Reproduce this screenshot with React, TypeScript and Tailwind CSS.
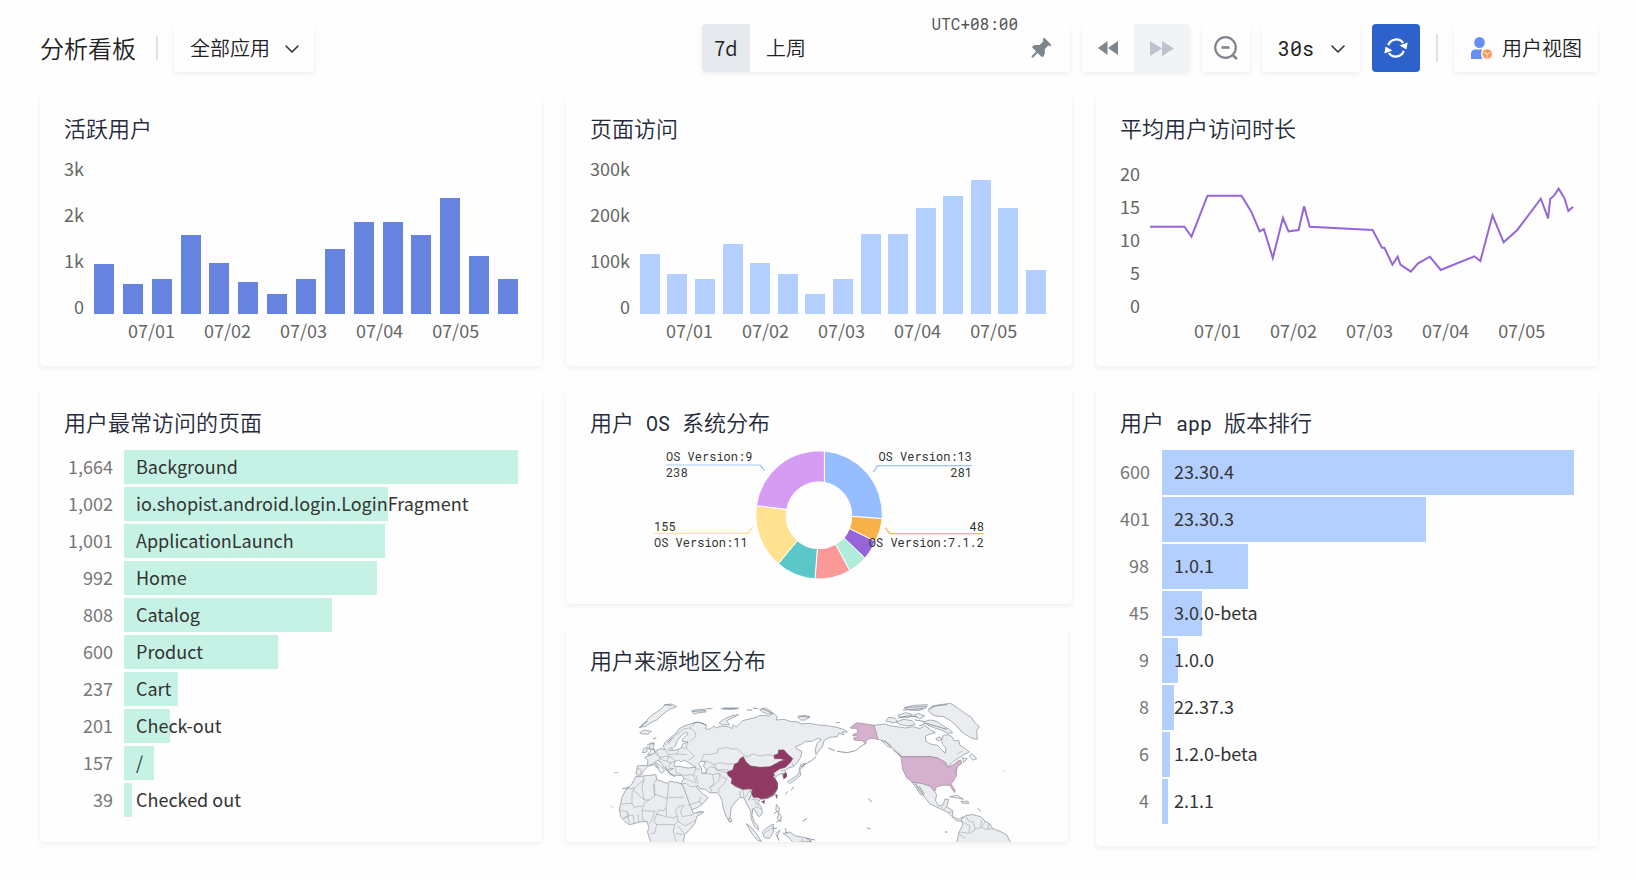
import type { ReactNode } from "react";

type Row = { label: string; value: string; size: number };

const dates = ["07/01", "07/02", "07/03", "07/04", "07/05"];
const activeUsers = [50, 30, 35, 79, 51, 32, 20, 35, 65, 92, 92, 79, 116, 58, 35];
const pageViews = [60, 40, 35, 70, 51, 40, 20, 35, 80, 80, 106, 118, 134, 106, 44];

const pages: Row[] = [
  { label: "Background", value: "1,664", size: 100 },
  { label: "io.shopist.android.login.LoginFragment", value: "1,002", size: 67 },
  { label: "ApplicationLaunch", value: "1,001", size: 66.2 },
  { label: "Home", value: "992", size: 64.2 },
  { label: "Catalog", value: "808", size: 52.8 },
  { label: "Product", value: "600", size: 39 },
  { label: "Cart", value: "237", size: 13.7 },
  { label: "Check-out", value: "201", size: 11.6 },
  { label: "/", value: "157", size: 7.6 },
  { label: "Checked out", value: "39", size: 2 },
];

const versions: Row[] = [
  { label: "23.30.4", value: "600", size: 100 },
  { label: "23.30.3", value: "401", size: 64 },
  { label: "1.0.1", value: "98", size: 20.9 },
  { label: "3.0.0-beta", value: "45", size: 9.7 },
  { label: "1.0.0", value: "9", size: 3.9 },
  { label: "22.37.3", value: "8", size: 2.9 },
  { label: "1.2.0-beta", value: "6", size: 1.9 },
  { label: "2.1.1", value: "4", size: 1.4 },
];

const durationLine =
  "0,52.7 34.5,52.7 41.5,62.7 57.5,21.7 91.5,21.7 101.3,37.7 109.6,57.3 113.8,55 122.8,84 132.9,44 138.5,57.3 148.6,56 154.1,32.3 159.7,52.7 222.6,56 232,73.7 234.4,73.7 242.4,90.7 247.6,82.7 250.4,90.7 260.8,97.7 268.1,89.3 279.9,82.7 290.7,96 324.4,82.3 330.3,87 342.5,41.3 353.6,68.3 367.5,55.7 390.8,24.7 398.1,44.3 400.2,25 404,21.7 408.6,14.7 414.5,24.3 418.3,37 423.1,32.7";

const shadow = "shadow-[0_2px_5px_rgba(20,40,60,0.07)]";

function Card({ title, className, children }: { title: ReactNode; className: string; children: ReactNode }) {
  return (
    <section className={`rounded bg-[#fefefe] pt-[15px] ${shadow} ${className}`}>
      <h2 className="text-[22px] leading-8 font-[350] whitespace-pre text-[#252b3a]">{title}</h2>
      {children}
    </section>
  );
}

function Mono({ children }: { children: ReactNode }) {
  return <span className="font-['Roboto_Mono','Liberation_Mono',monospace] text-[20px] leading-none font-normal">{children}</span>;
}

function Dates({ className }: { className: string }) {
  return (
    <div className={`flex gap-[29px] text-lg leading-6 text-[#666] ${className}`}>
      {dates.map((d) => (
        <span key={d}>{d}</span>
      ))}
    </div>
  );
}

function BarChart({ ticks, bars, color, dateClass }: { ticks: string[]; bars: number[]; color: string; dateClass: string }) {
  return (
    <>
      <div className="mt-[13px] flex gap-2.5">
        <div className="flex flex-col gap-[22px] text-right text-lg leading-6 text-[#666]">
          {ticks.map((t) => (
            <span key={t}>{t}</span>
          ))}
        </div>
        <div className="flex flex-1 items-end justify-between pb-1">
          {bars.map((h, i) => (
            <div key={i} className={`w-5 ${color}`} style={{ height: h }} />
          ))}
        </div>
      </div>
      <Dates className={dateClass} />
    </>
  );
}

function RankList({ rows, rowClass, valueClass, barClass, gapClass }: { rows: Row[]; rowClass: string; valueClass: string; barClass: string; gapClass: string }) {
  return (
    <ol className={`mt-[13px] flex flex-col text-lg ${gapClass}`}>
      {rows.map((r) => (
        <li key={r.label} className={`flex items-center ${rowClass}`}>
          <span className={`shrink-0 pb-[3px] text-right text-[#777] ${valueClass}`}>{r.value}</span>
          <div className="h-full min-w-0 flex-1">
            <div className={`flex h-full items-center pb-[3px] whitespace-nowrap text-[#333] ${barClass}`} style={{ width: `${r.size}%` }}>
              <span className="ml-3 w-0">{r.label}</span>
            </div>
          </div>
        </li>
      ))}
    </ol>
  );
}

function Chevron({ className }: { className: string }) {
  return (
    <svg viewBox="0 0 14 8" className={`pointer-events-none absolute top-[21px] h-2 w-3.5 ${className}`} fill="none" stroke="#333" strokeWidth="1.6" strokeLinecap="round" strokeLinejoin="round">
      <path d="M1 1l6 6 6-6" />
    </svg>
  );
}

function Donut() {
  return (
    <svg viewBox="0 0 360 150" className="mx-auto mt-0.5 h-[150px] w-[360px]" role="img" aria-label="OS">
      <g transform="translate(-79 -60) scale(0.33333)" stroke="#fff" strokeWidth="3" strokeLinejoin="round">
        <path fill="#96bdff" d="M793 216A190 193 0 0 1 967 419L875 412A98 100 0 0 0 793 310Z" />
        <path fill="#f7b24a" d="M967 419A190 193 0 0 1 946 487L868 449A98 100 0 0 0 875 412Z" />
        <path fill="#9466da" d="M946 487A190 193 0 0 1 915 538L852 477A98 100 0 0 0 868 449Z" />
        <path fill="#afecd9" d="M915 538A190 193 0 0 1 869 575L827 496A98 100 0 0 0 852 477Z" />
        <path fill="#fb9898" d="M869 575A190 193 0 0 1 765 600L772 509A98 100 0 0 0 827 496Z" />
        <path fill="#5bc7c9" d="M765 600A190 193 0 0 1 655 554L712 485A98 100 0 0 0 772 509Z" />
        <path fill="#ffe190" d="M655 554A190 193 0 0 1 589 380L680 391A98 100 0 0 0 712 485Z" />
        <path fill="#d69bf2" d="M589 380A190 193 0 0 1 793 216L793 310A98 100 0 0 0 680 391Z" />
      </g>
      <g transform="translate(-79 -60) scale(0.33333)" fill="none" strokeWidth="4">
        <path stroke="#c3daff" strokeWidth="5" d="M318 258H600" />
        <path stroke="#9fc2ff" d="M600 258l14 17" />
        <path stroke="#9fc2ff" d="M1236 260H953L940 279" />
        <path stroke="#ffe29a" d="M282 463H564L578 444" />
        <path stroke="#fab957" d="M1271 464H989L976 446" />
      </g>
      <g className="font-['Roboto_Mono','Liberation_Mono',monospace] text-xs font-normal" fill="#333">
        <text x="27" y="22">OS Version:9</text>
        <text x="27" y="38">238</text>
        <text x="333" y="22" textAnchor="end">OS Version:13</text>
        <text x="333" y="38" textAnchor="end">281</text>
        <text x="15" y="92">155</text>
        <text x="15" y="108">OS Version:11</text>
        <text x="345" y="92" textAnchor="end">48</text>
        <text x="345" y="108" textAnchor="end">OS Version:7.1.2</text>
      </g>
    </svg>
  );
}

function WorldMap() {
  return (
    <svg viewBox="90 240 1380 426" className="mt-[25px] w-[460px] max-w-full" role="img" aria-label="地区" strokeLinejoin="round" strokeLinecap="round">
      <g fill="#ebecf0" stroke="#97a0aa" strokeWidth="2.5">
        {/* Eurasia */}
        <path d="M314 388L310 378 316 366 332 352 346 342 358 326 372 318 398 310 412 306 428 310 440 316 436 326 448 328 462 318 468 324 484 318 506 320 516 326 520 314 528 322 540 310 548 302 572 296 590 292 600 286 628 288 640 280 652 290 648 300 672 298 690 304 716 306 722 312 748 310 770 314 808 318 830 322 850 328 862 336 846 336 852 344 836 340 832 350 808 352 792 362 788 378 776 394 768 404 766 388 772 370 784 358 770 356 758 364 736 364 722 374 706 380 712 388 726 394 722 412 710 430 698 440 686 444 674 452 680 464 676 474 670 472 668 460 656 464 644 472 652 490 652 508 642 526 622 536 600 538 594 548 604 562 608 578 598 590 592 586 586 572 578 566 576 586 582 604 594 618 596 630 584 620 574 598 572 572 560 552 552 534 540 532 526 546 514 562 510 594 515 604 508 606 498 588 490 566 486 542 480 528 470 518 448 518 436 508 420 506 412 496 408 500 422 516 432 524 444 532 434 546 414 562 384 574 378 556 366 528 358 506 364 488 372 474 364 466 344 466 330 464 326 452 340 446 330 444 322 452 312 444 304 428 292 420 286 426 304 440 314 452 304 460 294 446 280 434 262 440 252 452 244 464 234 466 228 462 232 438 262 436 264 422 254 412 270 406 282 398 290 390 302 386Z" />
        <path fill="#fefefe" d="M424 424L436 426 430 438 440 450 438 462 426 458 424 444 416 432Z" />
        <path fill="#fefefe" d="M342 438L344 426 354 420 364 426 370 420 384 426 398 436 408 442 384 444 362 440Z" />
        <path fill="#fefefe" d="M326 390L332 382 336 388 346 378 352 362 366 344 380 336 384 342 370 354 366 364 384 366 368 372 364 384 348 390Z" />
        {/* Africa */}
        <path d="M228 470L250 468 288 464 290 480 306 484 320 490 330 484 354 488 366 492 376 516 388 550 400 580 424 574 432 576 410 590 406 608 392 626 374 644 370 668H272L262 634 268 624 260 604 240 606 226 610 208 614 194 604 182 590 178 570 182 552 186 532 198 508 214 494Z" />
        {/* Greenland, Iceland and Arctic islands */}
        <path d="M238 322L256 306 270 290 302 268 316 254 334 252 350 260 328 268 310 282 290 300 276 306 258 318Z" />
        <path d="M240 338L252 330 274 334 264 342 246 342ZM1106 270L1116 258 1140 254 1172 250 1196 266 1218 282 1234 292 1244 308 1258 320 1250 332 1252 358 1238 356 1214 342 1200 330 1190 318 1172 302 1150 290 1126 288 1112 280Z" />
        <path d="M396 272L416 268 436 268 438 276 416 278 402 282ZM484 266L512 264 536 264 520 268 496 268ZM478 308L494 296 514 288 536 284 516 294 500 302 508 314 488 314ZM600 268L616 264 630 272 640 280 622 282 608 276ZM714 292L732 286 750 290 736 300 724 300Z" />
        {/* Britain and Ireland */}
        <path d="M270 374L282 368 280 382 286 398 276 404 262 404 272 394 268 384ZM254 384L262 382 260 396 248 398Z" />
        {/* Canada */}
        <path d="M942 316L975 312 992 318 1012 320 1036 324 1058 320 1080 326 1094 316 1112 330 1126 338 1110 342 1096 348 1098 364 1112 372 1132 376 1142 386 1156 400 1158 384 1148 374 1144 362 1150 346 1164 344 1176 350 1182 362 1196 362 1200 376 1216 386 1228 396 1212 404 1196 414 1180 424 1164 440 1158 428 1132 414 1110 410 1024 410 1010 396 990 376 974 364 954 358Z" />
        <path d="M1228 408L1236 400 1250 416 1240 420ZM1208 414L1222 416 1212 426ZM978 302L986 292 1004 294 1012 304 1000 308ZM1010 306L1030 298 1056 302 1066 314 1044 318 1022 314ZM1014 286L1036 278 1058 284 1046 292 1024 292ZM1034 264L1060 256 1102 254 1098 264 1076 272 1050 270ZM1062 286L1076 280 1094 288 1080 296ZM1090 306L1110 300 1130 304 1150 318 1168 328 1178 338 1164 340 1144 330 1124 324 1106 316ZM1128 356L1140 350 1146 358 1134 362Z" />
        {/* Central and South America */}
        <path d="M1056 486L1090 490 1110 498 1124 514 1130 524 1126 542 1136 558 1150 554 1154 538 1166 538 1160 560 1178 572 1178 590 1196 598 1210 590 1204 604 1188 602 1174 588 1162 576 1140 566 1110 552 1096 534 1082 512 1066 490 1074 506 1090 526 1080 522 1066 500Z" />
        <path d="M1190 668L1198 634 1208 616 1204 598 1218 586 1238 584 1262 590 1276 604 1290 612 1298 626 1320 634 1340 644 1352 668Z" />
        {/* South-east Asia, Japan and the Pacific */}
        <path d="M560 612L574 622 590 642 604 664 594 662 578 644ZM608 636L622 622 640 612 640 636 628 656 614 652ZM650 554L658 564 656 578 664 590 662 606 652 596 656 582 648 570ZM648 640L660 630 652 648 656 660ZM670 640L690 636 706 648 732 652 756 664 700 668 688 654ZM718 448L722 434 736 430 728 442ZM684 484L700 474 714 464 720 450 722 466 708 478 690 490ZM508 594L516 598 514 606 508 604Z" />
        <path d="M1170 530L1192 526 1210 538 1192 534ZM1204 544L1224 544 1226 550 1208 550Z" />
      </g>
      <g fill="none" stroke="#a5adb6" strokeWidth="2">
        {/* Borders: Europe and western Asia */}
        <path d="M318 374L330 366 344 348 372 326 390 324 402 312M390 324L404 334 408 348 392 364M384 366L378 384 390 396 404 408 386 420M364 384L378 384M316 388L324 404 350 402 356 388M350 402L380 404M286 400L300 412 326 408 340 416 346 424M300 412L296 422M326 408L322 424 334 430M264 436L286 430M290 392L294 406M322 424L306 420 300 412M346 424L330 428 326 440M232 446L244 448 240 464M270 436L282 428" />
        <path d="M346 444L348 458 372 466 400 464 408 446M372 474L386 480 406 488M400 464L408 486M406 446L420 448M424 462L438 458 458 464 462 490 452 500 454 518M408 466L414 490M436 456L450 440 466 444 484 454 500 458M458 464L478 460 488 472 500 476M478 462L480 478 462 496 448 502M500 478L490 494 476 506 476 518M424 424L432 402 450 404 474 398 472 388 498 382 520 388 530 384 548 402 560 410M426 424L444 424 462 434 480 428 500 432 522 432M462 434L470 452 492 448 506 450" />
        <path d="M360 492L378 490 392 500 412 498M384 556L402 550 418 544 422 530M418 544L426 556" />
        {/* Borders: Mongolia, Amur, Indochina and India */}
        <path d="M560 410L580 402 600 408 626 404 642 408M680 400L698 416M700 438L694 424M514 488L524 500 548 508 576 510M548 508L552 532M540 514L540 532M556 532L564 518 574 512M574 540L584 536 598 542M580 566L592 560 604 568M584 540L592 556M664 452L674 450M726 656V666M612 640L640 622" />
        {/* Borders: Africa */}
        <path d="M250 468L252 480 222 504 198 508M222 504V510L216 514V550L186 552M222 512L252 540M252 480L246 500 252 540 268 540 284 528 280 494 288 480M284 494L284 528M284 522L322 536 326 490M326 532H370M322 536L318 562 312 572 296 570 290 582M268 540L252 550 246 572 284 574M216 550L222 562 246 558M206 586L220 586 222 610M234 584L236 606M246 572L248 600 262 606M182 572L200 574 206 586 190 594M284 574L276 600 268 610M290 582L318 590 340 594 352 588 346 574 354 560 372 556M318 562L320 588M352 588L354 604 376 618 406 600M372 556L362 572 366 590 400 584M290 582L282 604 290 614 344 614 354 604M344 614L340 634 348 668M290 614L284 640 272 640M354 618L372 640M348 640L370 644M200 574L208 608M192 596L206 590" />
        {/* Borders: the Americas */}
        <path d="M1204 604L1216 610 1230 618 1226 640 1202 636M1218 586L1224 602 1240 606 1246 628 1264 622 1276 604M1264 600L1262 620M1246 628L1230 640M1264 622L1276 628 1298 626M1286 612L1284 626M1196 640L1214 654M1140 556L1148 564M1160 560L1150 570M1178 574L1164 578M1206 394L1192 402" />
      </g>
      <g fill="none" stroke="#7f8994" strokeWidth="2.5">
        {/* Small islands and rugged coastlines */}
        <path d="M806 384L824 392M832 394L862 398 886 392 904 378 918 370M700 502L694 510M682 516L676 522M724 440L754 422 768 410M925 536L936 546M1156 636H1161M188 506L206 502M562 270H576M580 264L592 266M440 266H456M728 604L740 596M280 356L288 354M1254 566L1262 574M922 624L930 626M830 308H838M650 606L660 600M642 582L650 574M640 626L650 624M676 626L680 640M738 654L764 660" />
        <path strokeWidth="1.5" d="M164 458H174M152 558L160 564M412 580L424 576M1332 454H1334" />
        <path d="M966 362L980 376 994 384M974 362L992 378M1000 390L1014 402 1024 412M1016 400L1024 408M262 376L272 368 282 372M264 384L284 390M286 432L296 444M316 440L326 458M330 460L344 470M400 310L414 306 436 314M336 354L324 366M314 254L334 256M242 320L262 304M398 274L434 272M1036 262L1096 260M1030 270L1088 266M1016 294L1040 288 1070 290M1100 310L1160 328M1066 300L1090 304M1078 318L1096 310M1106 268L1126 258 1160 254M492 264L530 266M606 266L634 278M716 288L748 292M574 524L566 540M1190 446L1186 464M1078 500L1092 520" />
      </g>
      <g strokeWidth="2">
        <path fill="#903a63" stroke="#7a4a63" d="M502 456L518 450 524 432 534 428 540 416 550 410 558 426 572 438 600 442 630 440 650 430 660 424 676 420 662 416 644 416 642 406 654 402 656 390 672 390 682 402 698 416 690 428 676 442 660 446 648 454 640 460 644 466 638 468 646 478 652 488 652 506 640 524 622 534 604 536 592 532 580 532 574 518 578 508 566 506 548 508 526 498 514 490 516 476 504 466Z" />
        <path fill="#903a63" stroke="#7a4a63" d="M670 462L678 458 680 470 672 476ZM606 544L614 542 612 550ZM648 524L652 526 650 534Z" />
        <g fill="#d5b1cd" stroke="#9a8a9c">
          <path d="M872 322L884 312 892 308 904 310 918 312 942 316 954 358 936 355 924 357 914 370 908 362 884 361 880 354 894 350 890 347 878 347 880 343 894 338 892 332 892 325 874 325Z" />
          <path d="M1024 410H1110L1134 414 1154 426 1162 442 1180 434 1192 424 1202 420 1206 430 1194 438 1188 452 1190 466 1182 480 1174 492 1186 512 1184 518 1178 510 1170 496 1148 496 1130 500 1124 514 1110 498 1090 492 1058 486 1040 474 1028 448Z" />
        </g>
      </g>
    </svg>
  );
}

export default function App() {
  return (
    <div className="min-h-screen bg-[#fefefe] pt-6 pr-[38px] pb-8 pl-10 font-['Noto_Sans_CJK_SC',sans-serif] text-[#222]">
      <header className="flex h-12 items-center justify-between font-[350]">
        <div className="flex h-12 items-center">
          <h1 className="text-2xl font-[350]">分析看板</h1>
          <div className="mr-4 ml-5 h-6 w-0.5 bg-[#dfe3e8]" />
          <div className={`relative h-12 w-[140px] rounded ${shadow}`}>
            <select aria-label="应用" className="h-12 w-full appearance-none rounded bg-transparent pl-4 text-[20px]">
              <option>全部应用</option>
            </select>
            <Chevron className="right-[15px]" />
          </div>
        </div>

        <div className="flex h-12 items-center gap-3">
          <div className={`relative flex h-12 w-[368px] rounded ${shadow}`}>
            <button className="w-12 rounded-l bg-[#e6e9ee] text-[20px]">7d</button>
            <input aria-label="时间范围" defaultValue="上周" className="min-w-0 flex-1 bg-transparent px-4 text-[20px]" />
            <button aria-label="固定" className="flex w-14 items-center justify-center pr-0.5 pb-0.5">
              <svg viewBox="34 48 64 64" className="h-[21px] w-[21px]" fill="#7f858d">
                <path d="M71 51L76 52 95 71 94 77 86 74 76 85 76 98 72 108 66 108 54 97 40 111 36 110 36 106 50 92 38 80 38 76 46 72 60 72 71 62Z" />
              </svg>
            </button>
            <span className="absolute -top-3 right-[52px] font-['Roboto_Mono','Liberation_Mono',monospace] text-base leading-6 font-normal text-[#555]">UTC+08:00</span>
          </div>
          <div className={`flex h-12 w-[108px] rounded ${shadow}`}>
            <button aria-label="后退" className="flex w-[52px] items-center justify-center">
              <svg viewBox="0 0 20 14" className="h-3.5 w-5" fill="#7f858d">
                <path d="M0 7L9.5 0V14ZM10 7L20 0V14Z" />
              </svg>
            </button>
            <button aria-label="前进" className="flex w-14 items-center justify-center rounded-r bg-[#f1f3f6]">
              <svg viewBox="0 0 24 15" className="h-[15px] w-6" fill="#bdc3cd">
                <path d="M12 7.500L0 0V15ZM24 7.500L12 0V15Z" />
              </svg>
            </button>
          </div>
          <button aria-label="缩小" className={`flex size-12 items-center justify-center rounded ${shadow}`}>
            <svg viewBox="0 0 24 24" className="size-6" fill="none" stroke="#7f858d" strokeWidth="2.200">
              <circle cx="11.500" cy="11.500" r="10.300" />
              <path d="M7.500 11.500h8" strokeWidth="2.600" />
              <path d="M18.500 19l4.500 4" strokeWidth="2.600" />
            </svg>
          </button>
          <div className={`relative h-12 w-[98px] rounded ${shadow}`}>
            <select aria-label="刷新间隔" className="h-12 w-full appearance-none rounded bg-transparent pl-4 font-['Roboto_Mono','Liberation_Mono',monospace] text-[20px] font-normal">
              <option>30s</option>
            </select>
            <Chevron className="right-[15px]" />
          </div>
          <button aria-label="刷新" className="flex size-12 items-center justify-center rounded bg-[#2d61cc]">
            <svg viewBox="192 46 72 74" className="size-6">
              <g fill="none" stroke="#fff" strokeWidth="7">
                <path d="M204 74A26 26 0 0 1 250 68" />
                <path d="M252 92A26 26 0 0 1 206 98" />
              </g>
              <path fill="#fff" d="M264 66L260 88 239 75ZM192 100L196 78 217 91Z" />
            </svg>
          </button>
          <div className="mx-1 h-7 w-0.5 bg-[#dfe3e8]" />
          <button className={`flex h-12 w-36 items-center gap-2.5 rounded pl-4 text-[20px] ${shadow}`}>
            <svg viewBox="0 0 22 22" className="size-[22px]">
              <ellipse cx="9.500" cy="5.500" rx="5.300" ry="5.500" fill="#6590f2" />
              <path fill="#6590f2" d="M1 22V17Q1 12.500 5.500 12.500H12.500Q11 14.500 11 17T12.500 22Z" />
              <circle cx="17.200" cy="17" r="4.800" fill="#fd9a5a" />
              <path d="M14 15.500l3.200 1.500 3.200-1.500M17.200 17V20.500" fill="none" stroke="#fff" strokeWidth=".8" />
            </svg>
            用户视图
          </button>
        </div>
      </header>

      <main className="mt-6 grid grid-cols-[502fr_506fr_502fr] items-start gap-6">
        <Card title="活跃用户" className="px-6 pb-6">
          <BarChart ticks={["3k", "2k", "1k", "0"]} bars={activeUsers} color="bg-[#6683e0]" dateClass="pl-16" />
        </Card>
        <Card title="页面访问" className="pr-[26px] pb-6 pl-6">
          <BarChart ticks={["300k", "200k", "100k", "0"]} bars={pageViews} color="bg-[#b3cfff]" dateClass="pl-[76px]" />
        </Card>
        <Card title="平均用户访问时长" className="px-6 pb-6">
          <div className="mt-[18px] flex gap-2.5">
            <div className="flex flex-col gap-[9px] pb-px text-right text-lg leading-6 text-[#666]">
              {["20", "15", "10", "5", "0"].map((t) => (
                <span key={t}>{t}</span>
              ))}
            </div>
            <div className="flex-1 pt-[13px]">
              <svg viewBox="0 0 424 140" className="h-[140px] w-full" preserveAspectRatio="none" fill="none" stroke="#9466da" strokeWidth="2">
                <polyline points={durationLine} />
              </svg>
            </div>
          </div>
          <Dates className="pl-[74px]" />
        </Card>

        <Card title="用户最常访问的页面" className="px-6 pb-[25px]">
          <RankList rows={pages} rowClass="h-[34px]" valueClass="w-[60px] pr-[11px]" barClass="bg-[#c6f2e5]" gapClass="gap-[3px]" />
        </Card>
        <div className="flex flex-col gap-6">
          <Card
            title={
              <>
                用户<Mono> OS </Mono>系统分布
              </>
            }
            className="px-6 pb-[15px]"
          >
            <Donut />
          </Card>
          <Card title="用户来源地区分布" className="mr-1 overflow-hidden pl-6">
            <WorldMap />
          </Card>
        </div>
        <Card
          title={
            <>
              用户<Mono> app </Mono>版本排行
            </>
          }
          className="px-6 pb-[22px]"
        >
          <RankList rows={versions} rowClass="h-[45px]" valueClass="w-[42px] pr-[13px]" barClass="bg-[#b3cfff]" gapClass="gap-0.5" />
        </Card>
      </main>
    </div>
  );
}
